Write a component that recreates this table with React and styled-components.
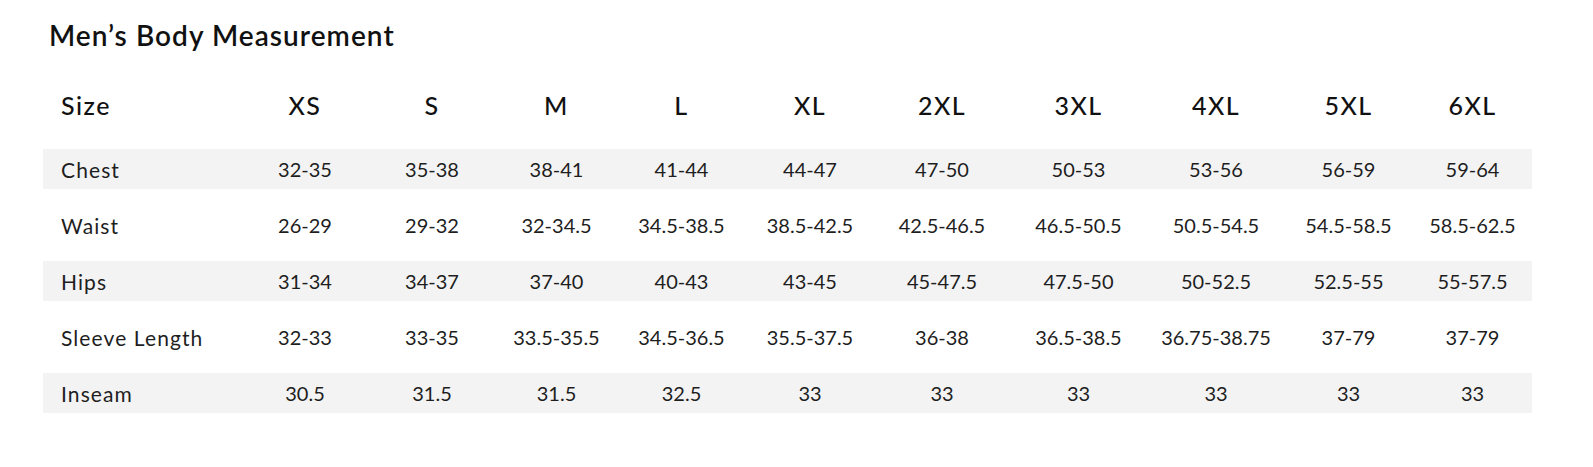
import React from "react";
import styled, { createGlobalStyle } from "styled-components";

const GlobalStyle = createGlobalStyle`
  html, body {
    margin: 0;
    padding: 0;
    background: #ffffff;
  }
`;

const COLUMNS = "198px 128px 126px 123px 127px 130px 134px 139px 136px 129px 119px";

const Page = styled.div`
  width: 1593px;
  height: 467px;
  box-sizing: border-box;
  padding: 17px 0 0 43px;
  font-family: Lato, "Liberation Sans", sans-serif;
  color: #1e1e1e;
`;

const Title = styled.h2`
  margin: 0 0 32px 6px;
  font-size: 28px;
  line-height: 36px;
  font-weight: 600;
  letter-spacing: 1.05px;
  color: #111111;
`;

const Table = styled.div`
  display: flex;
  flex-direction: column;
  width: 1489px;
`;

const HeadRow = styled.div`
  display: grid;
  grid-template-columns: ${COLUMNS};
  height: 40px;
  align-items: center;
  margin-bottom: 24px;
  font-size: 25px;
  font-weight: 500;
  letter-spacing: 1.5px;
  color: #111111;
`;

const Row = styled.div`
  display: grid;
  grid-template-columns: ${COLUMNS};
  height: 40px;
  align-items: center;
  margin-bottom: 16px;
  font-size: 20px;
  background: ${(p) => (p.$shaded ? "#f3f3f3" : "transparent")};
`;

const Label = styled.div`
  padding-left: 18px;
  text-align: left;
  font-size: ${(p) => (p.$head ? "25px" : "21px")};
  letter-spacing: ${(p) => (p.$head ? "1.5px" : "1.1px")};
`;

const Cell = styled.div`
  text-align: center;
  white-space: nowrap;
`;

const sizes = ["XS", "S", "M", "L", "XL", "2XL", "3XL", "4XL", "5XL", "6XL"];

const rows = [
  ["Chest", ["32-35", "35-38", "38-41", "41-44", "44-47", "47-50", "50-53", "53-56", "56-59", "59-64"]],
  ["Waist", ["26-29", "29-32", "32-34.5", "34.5-38.5", "38.5-42.5", "42.5-46.5", "46.5-50.5", "50.5-54.5", "54.5-58.5", "58.5-62.5"]],
  ["Hips", ["31-34", "34-37", "37-40", "40-43", "43-45", "45-47.5", "47.5-50", "50-52.5", "52.5-55", "55-57.5"]],
  ["Sleeve Length", ["32-33", "33-35", "33.5-35.5", "34.5-36.5", "35.5-37.5", "36-38", "36.5-38.5", "36.75-38.75", "37-79", "37-79"]],
  ["Inseam", ["30.5", "31.5", "31.5", "32.5", "33", "33", "33", "33", "33", "33"]],
];

export default function App() {
  return (
    <>
      <GlobalStyle />
      <Page>
        <Title>Men’s Body Measurement</Title>
        <Table>
          <HeadRow>
            <Label $head>Size</Label>
            {sizes.map((s) => (
              <Cell key={s}>{s}</Cell>
            ))}
          </HeadRow>
          {rows.map(([label, values], i) => (
            <Row key={label} $shaded={i % 2 === 0}>
              <Label>{label}</Label>
              {values.map((v, j) => (
                <Cell key={j}>{v}</Cell>
              ))}
            </Row>
          ))}
        </Table>
      </Page>
    </>
  );
}
